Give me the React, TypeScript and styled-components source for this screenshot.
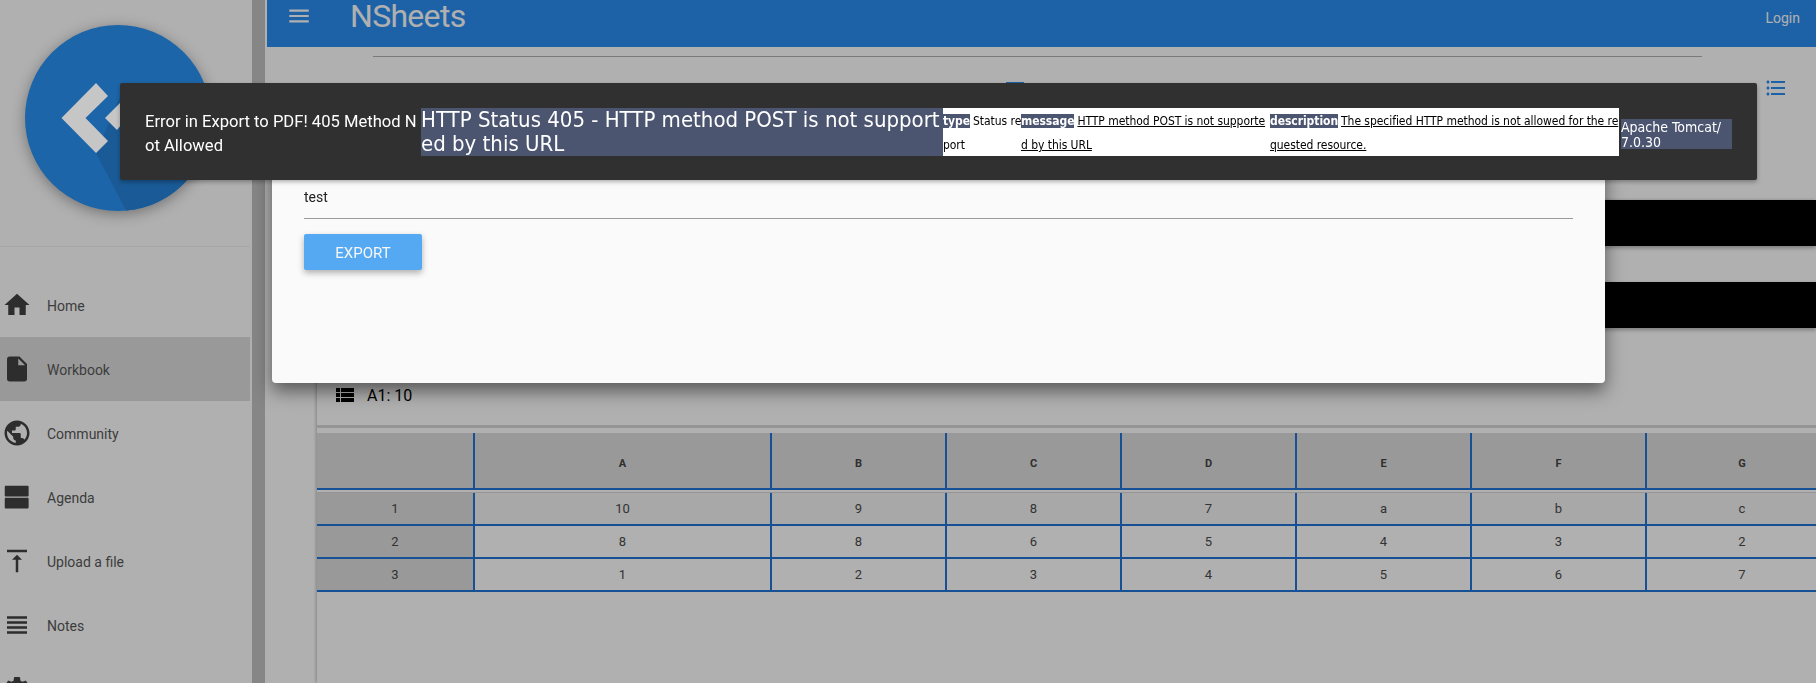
import React from 'react';
import styled, { createGlobalStyle } from 'styled-components';
import {
  MdHome,
  MdInsertDriveFile,
  MdPublic,
  MdVerticalAlignTop,
  MdViewHeadline,
  MdSettings,
  MdMenu,
  MdViewList,
  MdFormatListBulleted,
} from 'react-icons/md';

const GlobalStyle = createGlobalStyle`
  html, body {
    margin: 0;
    padding: 0;
    height: 100%;
    overflow: hidden;
    background: #fff;
    font-family: Roboto, "Liberation Sans", sans-serif;
  }
  #root {
    height: 100%;
  }
`;

const tahoma = `"DejaVu Sans", Tahoma, sans-serif`;
const gridBlue = '#2474d9';

const Page = styled.div`
  display: flex;
  height: 683px;
  overflow: hidden;
`;

const Sidebar = styled.aside`
  width: 250px;
  flex: none;
  overflow: hidden;
  background: #fff;
`;

const LogoBox = styled.div`
  height: 247px;
  padding: 25px 0 0 25px;
  box-sizing: border-box;
  border-bottom: 1px solid #a6a6a6;
  position: relative;
  z-index: 2;
`;

const NavList = styled.nav`
  padding-top: 26px;
`;

const NavItem = styled.a<{ $active?: boolean }>`
  display: flex;
  align-items: center;
  height: 64px;
  padding-left: 2px;
  gap: 15px;
  font-size: 14px;
  color: #595959;
  background: ${(p) => (p.$active ? '#dedede' : 'transparent')};

  svg {
    color: #424242;
    flex: none;
  }
`;

const NavLabel = styled.span`
  padding-top: 2px;
`;

const Scrollbar = styled.div`
  width: 13px;
  flex: none;
  margin-left: 2px;
  margin-right: 2px;
  background: #c3c3c3;
`;

const Main = styled.main`
  flex: 1;
  min-width: 0;
  display: flex;
  flex-direction: column;
`;

const Header = styled.header`
  height: 47px;
  flex: none;
  display: flex;
  align-items: center;
  background: #2a8ef2;
  color: #fff;
  padding: 0 16px 0 19px;
  box-sizing: border-box;
`;

const MenuButton = styled.div`
  display: flex;
  margin-top: -15px;
`;

const Brand = styled.div`
  font-size: 32px;
  line-height: 32px;
  margin: -16px 0 0 38px;
  padding-top: 1px;
  letter-spacing: -0.7px;
`;

const Login = styled.div`
  margin-left: auto;
  margin-top: -11px;
  font-size: 14px;
`;

const Rule = styled.div`
  height: 1px;
  background: #b1b1b1;
  margin: 9px 114px 0 106px;
`;

const Toolbar = styled.div`
  display: flex;
  margin-top: 19px;
  height: 24px;
  color: #2a8ef2;
`;

const TabMark = styled.div`
  width: 18px;
  height: 2px;
  margin: 6px 0 0 739px;
  background: #2a8ef2;
`;

const ListIcon = styled.div`
  display: flex;
  margin-left: auto;
  margin-right: 28px;
`;

const Card = styled.section`
  margin: 100px 0 0 50px;
  flex: 1;
  min-height: 0;
  overflow: hidden;
  box-shadow: -1px 0 3px rgba(0, 0, 0, 0.25);
`;

const BlackBar = styled.div`
  height: 46px;
  margin-bottom: 36px;
  background: #000;
  box-shadow: 0 2px 4px rgba(0, 0, 0, 0.3);
`;

const FormulaBar = styled.div`
  height: 42px;
  margin-top: 55px;
  display: flex;
  align-items: flex-start;
  padding-left: 16px;
  gap: 10px;
  font-size: 16px;
  line-height: 25px;
  color: #000;
  border-bottom: 3px solid #d8d8d8;

  svg {
    flex: none;
  }
`;

const Sheet = styled.table`
  margin-top: 5px;
  width: 1522px;
  table-layout: fixed;
  border-collapse: separate;
  border-spacing: 0;
  font-size: 13px;
  color: #4a4a4a;
  text-align: center;

  col:first-child {
    width: 158px;
  }
`;

const HeadCell = styled.th`
  height: 49px;
  padding: 6px 0 0;
  background: #dedede;
  font-size: 11px;
  font-weight: 700;
  color: #444;
  border-right: 2px solid ${gridBlue};
  border-bottom: 2px solid ${gridBlue};
`;

const SpacerCell = styled.td`
  height: 2px;
  padding: 0;
  border-bottom: 1px solid #d8d8d8;
`;

const IndexCell = styled.td`
  height: 31px;
  padding: 0;
  background: #dedede;
  border-right: 2px solid ${gridBlue};
  border-bottom: 2px solid ${gridBlue};
`;

const DataCell = styled.td<{ $tint?: boolean }>`
  height: 31px;
  padding: 0;
  background: ${(p) => (p.$tint ? '#f3f3f3' : '#fff')};
  border-right: 2px solid ${gridBlue};
  border-bottom: 2px solid ${gridBlue};
`;

const Backdrop = styled.div`
  position: fixed;
  inset: 0;
  background: rgba(0, 0, 0, 0.31);
  z-index: 1;
`;

const Dialog = styled.div`
  position: fixed;
  left: 272px;
  top: 100px;
  width: 1333px;
  height: 283px;
  box-sizing: border-box;
  padding: 85px 32px 0;
  border-radius: 4px;
  background: #fafafa;
  box-shadow: 0 8px 18px rgba(0, 0, 0, 0.5);
  z-index: 3;
`;

const FieldValue = styled.div`
  font-size: 14px;
  line-height: 24px;
  height: 33px;
  color: #222;
  border-bottom: 1px solid #9a9a9a;
`;

const ExportButton = styled.button`
  display: block;
  margin-top: 15px;
  width: 118px;
  height: 36px;
  padding: 2px 0 0;
  border: none;
  border-radius: 2px;
  background: #55a9f2;
  color: #f7f7f7;
  font-family: inherit;
  font-size: 15px;
  box-shadow: 0 3px 6px rgba(0, 0, 0, 0.3);
`;

const Toast = styled.div`
  position: fixed;
  left: 120px;
  top: 83px;
  width: 1637px;
  height: 97px;
  box-sizing: border-box;
  padding: 25px 0 0 25px;
  display: flex;
  align-items: flex-start;
  border-radius: 2px;
  background: #303030;
  color: #fff;
  box-shadow: 0 2px 4px rgba(0, 0, 0, 0.3);
  z-index: 4;
`;

const Message = styled.div`
  width: 276px;
  flex: none;
  padding-top: 2px;
  font-size: 16.6px;
  line-height: 24px;
  white-space: nowrap;
`;

const Heading = styled.h1`
  width: 522px;
  flex: none;
  margin: 0;
  background: #4c5570;
  font-family: ${tahoma};
  font-stretch: condensed;
  font-size: 22px;
  font-weight: 400;
  line-height: 24px;
  white-space: nowrap;
`;

const Details = styled.div`
  width: 676px;
  height: 48px;
  flex: none;
  display: flex;
  background: #fff;
  color: #000;
  font-family: ${tahoma};
  font-stretch: condensed;
  font-size: 12px;
  letter-spacing: -0.05px;
  line-height: 24px;
  white-space: nowrap;
`;

const DetailCol = styled.p<{ $width: number }>`
  width: ${(p) => p.$width}px;
  flex: none;
  margin: 0;
  padding-top: 1px;
  box-sizing: border-box;
`;

const Label = styled.b`
  background: #4c5570;
  color: #fff;
  margin-right: 3px;
`;

const Footer = styled.div`
  width: 111px;
  height: 30px;
  flex: none;
  margin: 11px 0 0 2px;
  padding-top: 1px;
  box-sizing: border-box;
  background: #4c5570;
  font-family: ${tahoma};
  font-stretch: condensed;
  font-size: 14px;
  line-height: 15px;
`;

const LogoMark = styled.svg`
  display: block;
  filter: drop-shadow(0 3px 7px rgba(0, 0, 0, 0.35));
`;

const Logo = () => (
  <LogoMark width="186" height="186" viewBox="0 0 186 186">
    <circle cx="93" cy="93" r="93" fill="#1d65a9" />
    <path d="M71 128 L101 185.6 A93 93 0 0 0 186 93 L100 60 Z" fill="#1a5b97" />
    <path d="M71 58 L36.5 93 L71 128 L83 116 L60.5 93 L83 71 Z" fill="#c6c6c6" />
    <path d="M80 93 L100 73 L110 83 L92 105 Z" fill="#c6c6c6" />
  </LogoMark>
);

const AgendaIcon = ({ size }: { size: number }) => (
  <svg width={size} height={size} viewBox="0 0 24 24" fill="currentColor">
    <path d="M20.5 12.6H3c-.4 0-.8.4-.8.8v7c0 .4.4.8.8.8h17.5c.4 0 .8-.4.8-.8v-7c0-.4-.4-.8-.8-.8zm0-9.6H3c-.4 0-.8.4-.8.8v7c0 .4.4.8.8.8h17.5c.4 0 .8-.4.8-.8v-7c0-.4-.4-.8-.8-.8z" />
  </svg>
);

const navItems = [
  { label: 'Home', icon: MdHome },
  { label: 'Workbook', icon: MdInsertDriveFile, active: true },
  { label: 'Community', icon: MdPublic },
  { label: 'Agenda', icon: AgendaIcon },
  { label: 'Upload a file', icon: MdVerticalAlignTop },
  { label: 'Notes', icon: MdViewHeadline },
  { label: '', icon: MdSettings },
];

const columns = ['A', 'B', 'C', 'D', 'E', 'F', 'G'];
const rows = [
  ['10', '9', '8', '7', 'a', 'b', 'c'],
  ['8', '8', '6', '5', '4', '3', '2'],
  ['1', '2', '3', '4', '5', '6', '7'],
];
const colWidths = [297, 175, 175, 175, 175, 175, 192];

const App = () => (
  <>
    <GlobalStyle />
    <Page>
      <Sidebar>
        <LogoBox>
          <Logo />
        </LogoBox>
        <NavList>
          {navItems.map(({ label, icon: Icon, active }) => (
            <NavItem key={label} $active={active}>
              <Icon size={30} />
              {label && <NavLabel>{label}</NavLabel>}
            </NavItem>
          ))}
        </NavList>
      </Sidebar>
      <Scrollbar />
      <Main>
        <Header>
          <MenuButton>
            <MdMenu size={26} />
          </MenuButton>
          <Brand>NSheets</Brand>
          <Login>Login</Login>
        </Header>
        <Rule />
        <Toolbar>
          <TabMark />
          <ListIcon>
            <MdFormatListBulleted size={24} />
          </ListIcon>
        </Toolbar>
        <Card>
          <BlackBar />
          <BlackBar />
          <FormulaBar>
            <MdViewList size={24} />
            A1: 10
          </FormulaBar>
          <Sheet>
            <colgroup>
              <col />
              {colWidths.map((w, i) => (
                <col key={i} style={{ width: w }} />
              ))}
            </colgroup>
            <thead>
              <tr>
                <HeadCell />
                {columns.map((c) => (
                  <HeadCell key={c}>{c}</HeadCell>
                ))}
              </tr>
            </thead>
            <tbody>
              <tr>
                <SpacerCell colSpan={8} />
              </tr>
              {rows.map((row, r) => (
                <tr key={r}>
                  <IndexCell>{r + 1}</IndexCell>
                  {row.map((v, c) => (
                    <DataCell key={c} $tint={r === 0}>
                      {v}
                    </DataCell>
                  ))}
                </tr>
              ))}
            </tbody>
          </Sheet>
        </Card>
      </Main>
    </Page>
    <Backdrop />
    <Dialog>
      <FieldValue>test</FieldValue>
      <ExportButton>EXPORT</ExportButton>
    </Dialog>
    <Toast>
      <Message>
        Error in Export to PDF! 405 Method N
        <br />
        ot Allowed
      </Message>
      <Heading>
        HTTP Status 405 - HTTP method POST is not support
        <br />
        ed by this URL
      </Heading>
      <Details>
        <DetailCol $width={78}>
          <Label>type</Label>Status re
          <br />
          port
        </DetailCol>
        <DetailCol $width={249}>
          <Label>message</Label>
          <u>HTTP method POST is not supporte</u>
          <br />
          <u>d by this URL</u>
        </DetailCol>
        <DetailCol $width={349}>
          <Label>description</Label>
          <u>The specified HTTP method is not allowed for the re</u>
          <br />
          <u>quested resource.</u>
        </DetailCol>
      </Details>
      <Footer>
        Apache Tomcat/
        <br />
        7.0.30
      </Footer>
    </Toast>
  </>
);

export default App;
